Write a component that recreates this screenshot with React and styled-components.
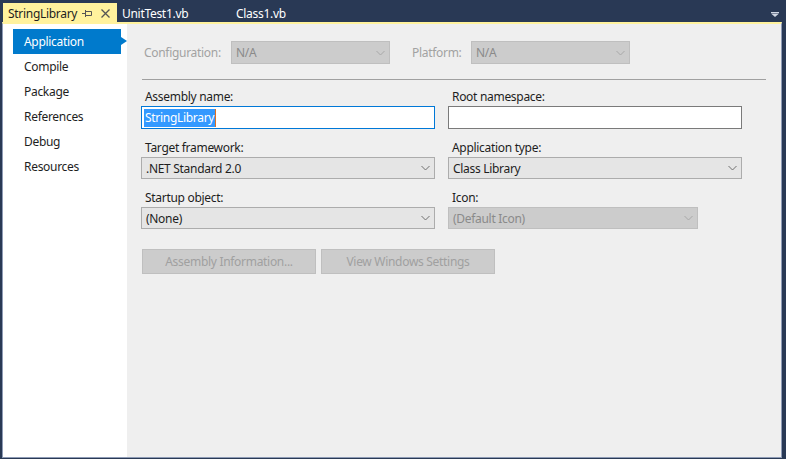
import React from 'react'
import styled, { createGlobalStyle } from 'styled-components'

const Global = createGlobalStyle`
    html, body {
        margin: 0;
        padding: 0;
        background: #293955;
    }
    * {
        box-sizing: border-box;
    }
`

const Window = styled.div`
    width: 786px;
    height: 459px;
    background: #293955;
    display: flex;
    flex-direction: column;
    padding: 0 4px 1px 2px;
    font-family: "Noto Sans", "Open Sans", sans-serif;
    font-size: 12px;
    letter-spacing: -0.3px;
    color: #1e1e1e;
    overflow: hidden;
`

const TabStrip = styled.div`
    height: 22px;
    display: flex;
    align-items: flex-end;
    position: relative;
`

const Tab = styled.div`
    height: 19px;
    display: flex;
    align-items: center;
    padding-left: 5px;
    width: ${p => p.$width}px;
    margin-left: ${p => p.$active ? '1px' : '0'};
    background: ${p => p.$active ? '#fff29d' : 'transparent'};
    color: ${p => p.$active ? '#1e1e1e' : '#ffffff'};
    line-height: 19px;
    padding-top: 2px;
`

const TabTitle = styled.span`
    flex: 1;
    white-space: nowrap;
`

const TabIcons = styled.span`
    display: flex;
    align-items: center;
    gap: 9px;
    margin-right: 7px;
`

const OverflowArrow = styled.div`
    position: absolute;
    right: 3px;
    top: 12px;
    display: flex;
`

const Frame = styled.div`
    flex: 1;
    display: flex;
    border-top: 2px solid #fff29d;
    border-left: 1px solid #8e9bb5;
    border-right: 1px solid #8e9bb5;
    border-bottom: 1px solid #8e9bb5;
`

const Sidebar = styled.div`
    width: 124px;
    background: #ffffff;
    padding-top: 5px;
`

const NavItem = styled.div`
    position: relative;
    height: 25px;
    line-height: 25px;
    margin-left: 10px;
    width: 108px;
    padding-left: 11px;
    background: ${p => p.$selected ? '#007acc' : 'transparent'};
    color: ${p => p.$selected ? '#ffffff' : '#1e1e1e'};

    ${p => p.$selected && `
        &::after {
            content: '';
            position: absolute;
            right: -6px;
            top: 8px;
            border-top: 4.5px solid transparent;
            border-bottom: 4.5px solid transparent;
            border-left: 6px solid #007acc;
        }
    `}
`

const Content = styled.div`
    flex: 1;
    background: #efefef;
    padding: 17px 15px 0 14px;
    display: flex;
    flex-direction: column;
`

const ConfigRow = styled.div`
    display: flex;
    align-items: center;
    height: 23px;
    padding-left: 3px;
`

const DimLabel = styled.span`
    color: #a2a2a2;
    width: ${p => p.$w}px;
    white-space: nowrap;
`

const Separator = styled.div`
    height: 1px;
    background: #a0a0a0;
    margin: 15px 0 8px 1px;
`

const FormGrid = styled.div`
    display: grid;
    grid-template-columns: 294px 294px;
    column-gap: 13px;
    row-gap: 10px;
`

const Field = styled.div`
    display: flex;
    flex-direction: column;
`

const Label = styled.div`
    height: 18px;
    line-height: 18px;
    padding-left: 4px;
`

const TextBox = styled.div`
    height: 23px;
    background: #ffffff;
    border: 1px solid ${p => p.$focused ? '#0078d7' : '#7a7a7a'};
    display: flex;
    align-items: center;
    padding-left: 2px;
`

const Selected = styled.span`
    background: #3399ff;
    color: #ffffff;
    line-height: 18px;
    padding: 0 1px;
    border-right: 1px solid #e07020;
`

const Select = styled.div`
    height: ${p => p.$h || 22}px;
    width: ${p => p.$w ? `${p.$w}px` : 'auto'};
    background: ${p => p.$disabled ? '#cccccc' : '#e5e5e5'};
    border: 1px solid ${p => p.$disabled ? '#bfbfbf' : '#acacac'};
    color: ${p => p.$disabled ? '#8a8a8a' : '#1e1e1e'};
    display: flex;
    align-items: center;
    padding: 0 4px;
    margin-right: ${p => p.$mr || 0}px;
`

const SelectText = styled.span`
    flex: 1;
`

const ButtonRow = styled.div`
    display: flex;
    gap: 5px;
    margin-top: 20px;
    padding-left: 1px;
`

const Button = styled.div`
    width: 174px;
    height: 25px;
    background: #cccccc;
    border: 1px solid #bfbfbf;
    color: #a0a0a0;
    display: flex;
    align-items: center;
    justify-content: center;
`

function Chevron({ color }) {
    return (
        <svg width="9" height="6" viewBox="0 0 9 6">
            <path d="M0.5 1 L4.5 5 L8.5 1" fill="none" stroke={color} strokeWidth="1" />
        </svg>
    )
}

function Dropdown({ value, disabled, w, h, mr }) {
    return (
        <Select $disabled={disabled} $w={w} $h={h} $mr={mr}>
            <SelectText>{value}</SelectText>
            <Chevron color={disabled ? '#a8a8a8' : '#707070'} />
        </Select>
    )
}

function PinIcon() {
    return (
        <svg width="10" height="9" viewBox="0 0 10 9">
            <path d="M0 4.5 H3.5 M3.5 1 V8 M3.5 2.5 H9.5 V6.5 H3.5" fill="none" stroke="#555" strokeWidth="1" />
        </svg>
    )
}

function CloseIcon() {
    return (
        <svg width="9" height="9" viewBox="0 0 9 9">
            <path d="M0.5 0.5 L8.5 8.5 M8.5 0.5 L0.5 8.5" fill="none" stroke="#555" strokeWidth="1.3" />
        </svg>
    )
}

const navItems = ['Application', 'Compile', 'Package', 'References', 'Debug', 'Resources']

function App() {
    return (
        <Window>
            <Global />
            <TabStrip>
                <Tab $active $width={114}>
                    <TabTitle>StringLibrary</TabTitle>
                    <TabIcons>
                        <PinIcon />
                        <CloseIcon />
                    </TabIcons>
                </Tab>
                <Tab $width={114}>UnitTest1.vb</Tab>
                <Tab $width={100}>Class1.vb</Tab>
                <OverflowArrow>
                    <svg width="8" height="5" viewBox="0 0 8 5">
                        <rect x="0" y="0" width="8" height="1" fill="#cfd6e3" />
                        <path d="M0 1.5 H8 L4 5 Z" fill="#cfd6e3" />
                    </svg>
                </OverflowArrow>
            </TabStrip>
            <Frame>
                <Sidebar>
                    {navItems.map((n, i) => (
                        <NavItem key={n} $selected={i === 0}>{n}</NavItem>
                    ))}
                </Sidebar>
                <Content>
                    <ConfigRow>
                        <DimLabel $w={87}>Configuration:</DimLabel>
                        <Dropdown value="N/A" disabled w={159} h={23} mr={22} />
                        <DimLabel $w={59}>Platform:</DimLabel>
                        <Dropdown value="N/A" disabled w={159} h={23} />
                    </ConfigRow>
                    <Separator />
                    <FormGrid>
                        <Field>
                            <Label>Assembly name:</Label>
                            <TextBox $focused>
                                <Selected>StringLibrary</Selected>
                            </TextBox>
                        </Field>
                        <Field>
                            <Label>Root namespace:</Label>
                            <TextBox />
                        </Field>
                        <Field>
                            <Label>Target framework:</Label>
                            <Dropdown value=".NET Standard 2.0" />
                        </Field>
                        <Field>
                            <Label>Application type:</Label>
                            <Dropdown value="Class Library" />
                        </Field>
                        <Field>
                            <Label>Startup object:</Label>
                            <Dropdown value="(None)" />
                        </Field>
                        <Field>
                            <Label>Icon:</Label>
                            <Dropdown value="(Default Icon)" disabled w={250} />
                        </Field>
                    </FormGrid>
                    <ButtonRow>
                        <Button>Assembly Information...</Button>
                        <Button>View Windows Settings</Button>
                    </ButtonRow>
                </Content>
            </Frame>
        </Window>
    )
}

export default App
